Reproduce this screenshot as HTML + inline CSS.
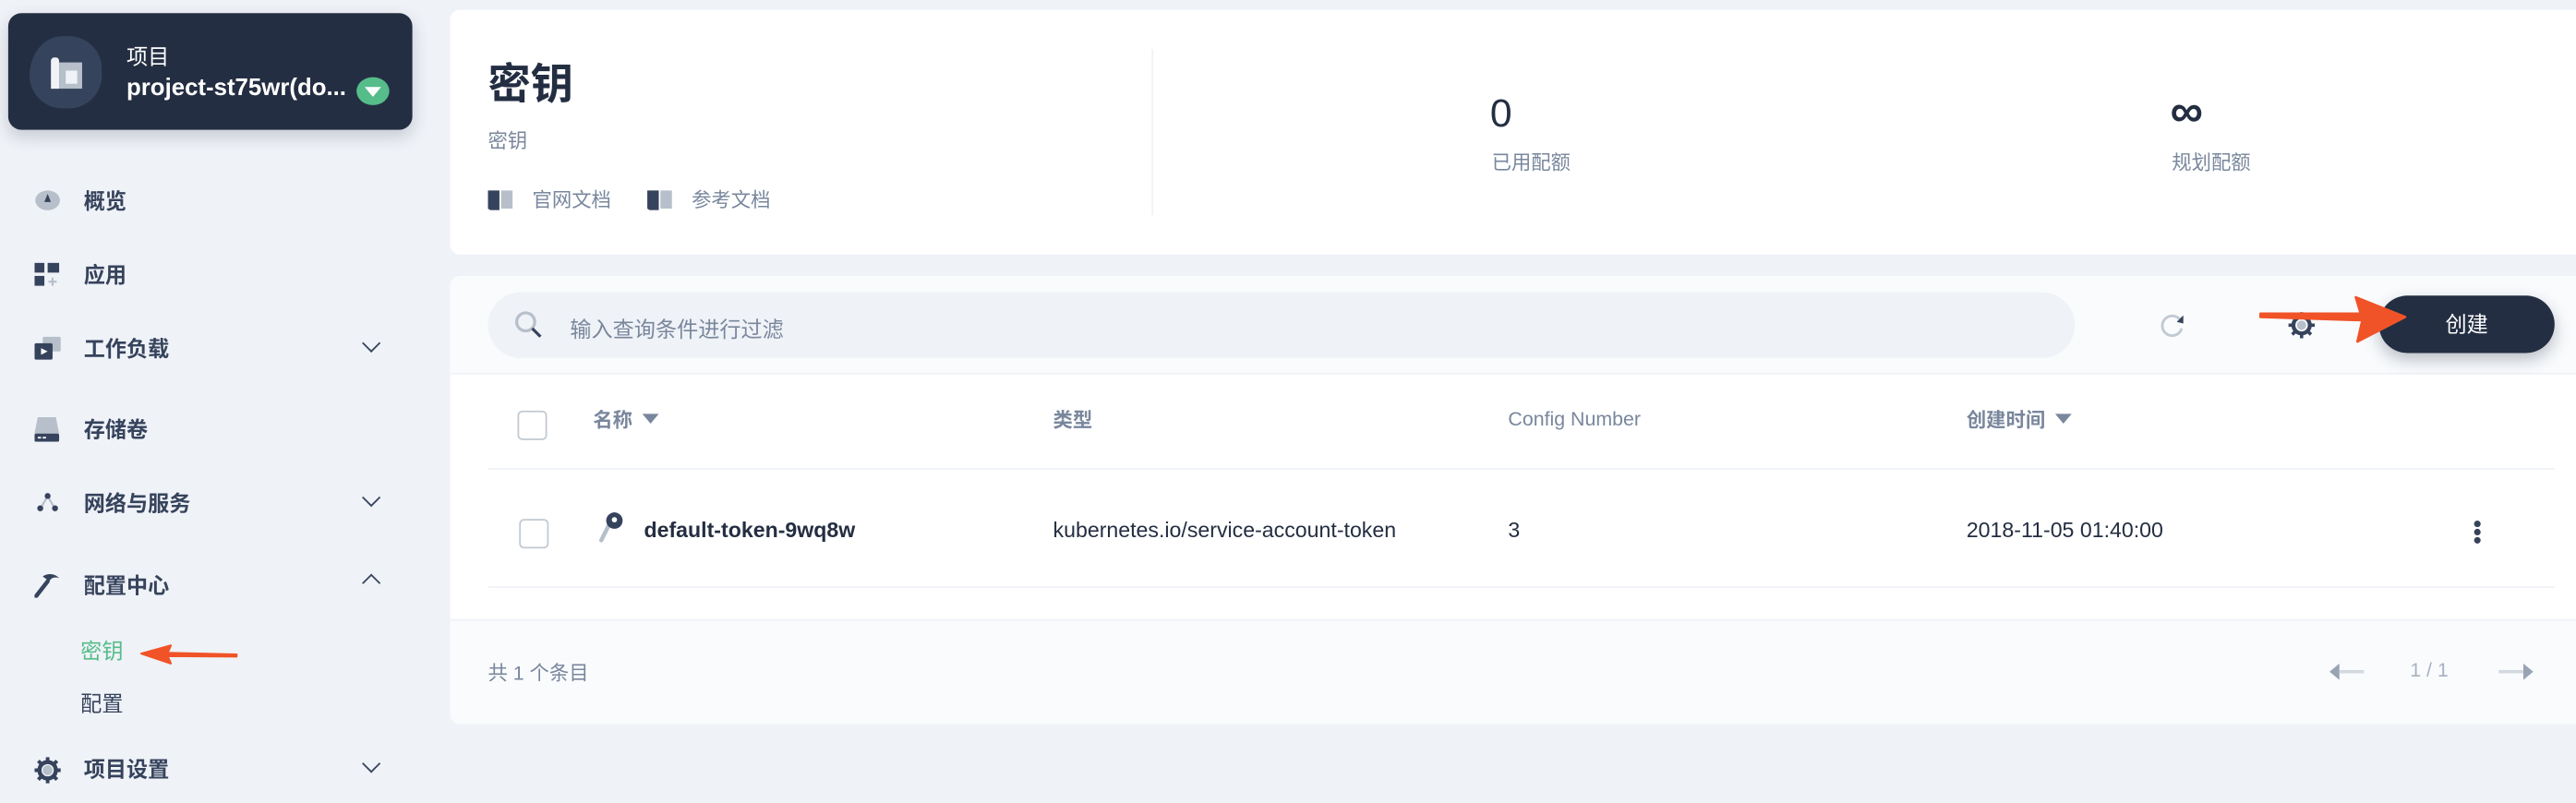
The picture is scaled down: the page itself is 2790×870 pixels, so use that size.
<!DOCTYPE html>
<html><head><meta charset="utf-8"><style>
*{box-sizing:border-box;margin:0;padding:0}
html,body{width:2790px;height:870px;overflow:hidden;background:#eff2f7}
#w{position:absolute;left:0;top:0;width:1568px;height:489px;transform:scale(1.7793);transform-origin:0 0;font-family:"Liberation Sans","Noto Sans CJK SC",sans-serif;color:#242e42}
.a{position:absolute;white-space:nowrap}
.mi{position:absolute;left:51px;font-size:13px;font-weight:bold;color:#36435c}
.ic{position:absolute;left:21px}
.chev{position:absolute;left:222px;width:8px;height:8px;border-right:1.6px solid #36435c;border-bottom:1.6px solid #36435c;transform:rotate(45deg)}
.up{transform:rotate(-135deg)}
.cb{position:absolute;width:18px;height:18px;border:1px solid #c1c9d1;border-radius:3px;background:#fff}
.th{position:absolute;top:247px;font-size:12px;font-weight:bold;color:#79879c}
.td{position:absolute;top:315px;font-size:13px;color:#242e42}
.tri{display:inline-block;width:0;height:0;border-left:5px solid transparent;border-right:5px solid transparent;border-top:6px solid #79879c;margin-left:6px;vertical-align:2px}
</style></head><body><div id="w">
<div class="a" style="left:5px;top:8px;width:246px;height:71px;background:#242e42;border-radius:8px;box-shadow:0 4px 10px rgba(36,46,66,.2)"></div>
<div class="a" style="left:18px;top:22px;width:44px;height:44px;background:#36435c;border-radius:50% 50% 50% 50%/60% 50% 50% 50%"></div>
<div class="a" style="left:31px;top:35px;width:5px;height:19px;background:#eff2f7;border-radius:2px 2px 0 0"></div>
<div class="a" style="left:36px;top:38px;width:14px;height:16px;background:#b6bfca"></div>
<div class="a" style="left:40px;top:43px;width:7px;height:8px;background:#eff2f7"></div>
<div class="a" style="left:77px;top:24px;font-size:13px;color:#fff">项目</div>
<div class="a" style="left:77px;top:46px;font-size:14.5px;font-weight:bold;color:#fff">project-st75wr(do...</div>
<div class="a" style="left:217px;top:47px;width:20px;height:17px;border-radius:50%;background:#55bc8a"></div>
<div class="a" style="left:222px;top:53px;width:0;height:0;border-left:5px solid transparent;border-right:5px solid transparent;border-top:6px solid #fff"></div>
<svg class="ic" style="top:115px" width="16" height="14" viewBox="0 0 16 14"><ellipse cx="8" cy="7" rx="7.5" ry="6" fill="#b6bfca"/><path d="M8 3 L10 8 H6Z" fill="#36435c"/></svg>
<div class="mi" style="top:112px">概览</div>
<svg class="ic" style="top:160px" width="16" height="15" viewBox="0 0 16 15"><rect x="0" y="0" width="6" height="6" fill="#36435c"/><rect x="8" y="0" width="7" height="6" fill="#36435c"/><rect x="0" y="8" width="6" height="6" fill="#36435c"/><path d="M11 9v5M8.5 11.5h5" stroke="#b6bfca" stroke-width="1.2"/></svg>
<div class="mi" style="top:157px">应用</div>
<svg class="ic" style="top:205px" width="16" height="15" viewBox="0 0 16 15"><rect x="5" y="0" width="11" height="9" rx="1" fill="#b6bfca"/><rect x="0" y="4" width="11" height="10" rx="1" fill="#36435c"/><path d="M4 7 L8 9 L4 11Z" fill="#fff"/></svg>
<div class="mi" style="top:202px">工作负载</div><div class="chev" style="top:205px"></div>
<svg class="ic" style="top:254px" width="16" height="15" viewBox="0 0 16 15"><path d="M2 0h11l2 10H0Z" fill="#b6bfca"/><rect x="0" y="10" width="15" height="5" rx="1" fill="#36435c"/><rect x="2" y="12" width="2" height="1" fill="#fff"/><rect x="5" y="12" width="2" height="1" fill="#fff"/></svg>
<div class="mi" style="top:251px">存储卷</div>
<svg class="ic" style="top:299px" width="16" height="14" viewBox="0 0 16 14"><path d="M8 3L4 10M8 3l4 7" stroke="#b6bfca" stroke-width="1.2"/><circle cx="8" cy="3" r="1.8" fill="#36435c"/><circle cx="3.5" cy="10.5" r="1.8" fill="#36435c"/><circle cx="12.5" cy="10.5" r="1.8" fill="#36435c"/></svg>
<div class="mi" style="top:296px">网络与服务</div><div class="chev" style="top:299px"></div>
<svg class="ic" style="top:348px" width="16" height="16" viewBox="0 0 16 16"><path d="M1 15L8 6" stroke="#36435c" stroke-width="2.5" stroke-linecap="round"/><path d="M5 3 C8 1 12 1 15 4 C12 3 10 4 9 6Z" fill="#36435c"/></svg>
<div class="mi" style="top:346px">配置中心</div><div class="chev up" style="top:351px"></div>
<div class="a" style="left:49px;top:386px;font-size:13px;color:#55bc8a">密钥</div>
<div class="a" style="left:49px;top:418px;font-size:13px;color:#36435c">配置</div>
<svg class="ic" style="top:461px" width="16" height="16" viewBox="0 0 16 16"><circle cx="8" cy="8" r="5" fill="none" stroke="#36435c" stroke-width="2.5"/><g stroke="#36435c" stroke-width="2.2"><path d="M8 0v3M8 13v3M0 8h3M13 8h3M2.3 2.3l2 2M11.7 11.7l2 2M2.3 13.7l2-2M11.7 4.3l2-2"/></g><circle cx="8" cy="8" r="3" fill="#b6bfca"/></svg>
<div class="mi" style="top:458px">项目设置</div><div class="chev" style="top:461px"></div>
<svg class="a" style="left:84px;top:389px" width="62" height="18" viewBox="0 0 62 18"><path d="M60 9.5 L18 8.5 L20 4 L2 9 L20 15 L18 10.5 L60 10.8Z" fill="#f05327" stroke="#f05327" stroke-width="1.2" stroke-linejoin="round"/></svg>
<div class="a" style="left:274px;top:6px;width:1300px;height:149px;background:#fff;border-radius:6px"></div>
<div class="a" style="left:297px;top:31px;font-size:26px;font-weight:bold;color:#242e42">密钥</div>
<div class="a" style="left:297px;top:77px;font-size:12px;color:#79879c">密钥</div>
<svg class="a" style="left:297px;top:115px" width="16" height="13" viewBox="0 0 16 13"><path d="M0 1h7v12H1.5L0 12Z" fill="#36435c"/><rect x="8" y="1" width="7" height="11" fill="#b6bfca"/></svg>
<div class="a" style="left:324px;top:113px;font-size:12px;color:#79879c">官网文档</div>
<svg class="a" style="left:394px;top:115px" width="16" height="13" viewBox="0 0 16 13"><path d="M0 1h7v12H1.5L0 12Z" fill="#36435c"/><rect x="8" y="1" width="7" height="11" fill="#b6bfca"/></svg>
<div class="a" style="left:421px;top:113px;font-size:12px;color:#79879c">参考文档</div>
<div class="a" style="left:701px;top:30px;width:1px;height:101px;background:#eff2f7"></div>
<div class="a" style="left:907px;top:56px;font-size:24px;color:#242e42">0</div>
<div class="a" style="left:908px;top:90px;font-size:12px;color:#79879c">已用配额</div>
<div class="a" style="left:1321px;top:52px;font-size:28px;font-weight:bold;color:#242e42">∞</div>
<div class="a" style="left:1322px;top:90px;font-size:12px;color:#79879c">规划配额</div>
<div class="a" style="left:274px;top:168px;width:1300px;height:273px;background:#fff;border-radius:6px;overflow:hidden">
<div class="a" style="left:0;top:0;width:1300px;height:60px;background:#f9fbfd;border-bottom:1px solid #eff2f7"></div>
<div class="a" style="left:0;top:209px;width:1300px;height:64px;background:#f9fbfd;border-top:1px solid #eff2f7"></div>
</div>
<div class="a" style="left:297px;top:178px;width:966px;height:40px;background:#eff2f7;border-radius:20px"></div>
<svg class="a" style="left:313px;top:189px" width="18" height="18" viewBox="0 0 18 18"><circle cx="7" cy="7" r="5.5" fill="none" stroke="#b6bfca" stroke-width="1.8"/><path d="M11 11l5 5" stroke="#36435c" stroke-width="1.8"/></svg>
<div class="a" style="left:347px;top:190px;font-size:13px;color:#79879c">输入查询条件进行过滤</div>
<svg class="a" style="left:1314px;top:189px" width="18" height="18" viewBox="0 0 18 18"><path d="M13.5 6.5 A6 6 0 1 0 14 11" fill="none" stroke="#c1c9d1" stroke-width="1.6"/><path d="M15 3 L15 8 L11 7Z" fill="#36435c"/></svg>
<svg class="a" style="left:1393px;top:190px" width="16" height="16" viewBox="0 0 16 16"><circle cx="8" cy="8" r="5" fill="none" stroke="#36435c" stroke-width="2.4"/><g stroke="#36435c" stroke-width="2"><path d="M8 0v3M8 13v3M0 8h3M13 8h3M2.3 2.3l2 2M11.7 11.7l2 2M2.3 13.7l2-2M11.7 4.3l2-2"/></g><circle cx="8" cy="8" r="2.8" fill="#b6bfca"/></svg>
<div class="a" style="left:1448px;top:180px;width:107px;height:35px;background:#242e42;border-radius:18px;box-shadow:0 4px 10px rgba(36,46,66,.3);color:#fff;font-size:13px;text-align:center;line-height:35px">创建</div>
<svg class="a" style="left:1374px;top:180px" width="92" height="30" viewBox="0 0 92 30"><path d="M2 13 L64 15 L61 28 L90 13 L60 1 L63 11 L2 11Z" fill="#f05327" stroke="#f05327" stroke-width="1.5" stroke-linejoin="round"/></svg>
<div class="cb" style="left:315px;top:250px"></div>
<div class="th" style="left:361px">名称<span class="tri"></span></div>
<div class="th" style="left:641px">类型</div>
<div class="th" style="left:918px;font-weight:normal;top:248px">Config Number</div>
<div class="th" style="left:1197px">创建时间<span class="tri"></span></div>
<div class="a" style="left:297px;top:285px;width:1258px;height:1px;background:#eff2f7"></div>
<div class="cb" style="left:316px;top:316px"></div>
<svg class="a" style="left:364px;top:311px" width="18" height="20" viewBox="0 0 18 20"><path d="M7 8 L2 18" stroke="#b6bfca" stroke-width="2.5" stroke-linecap="round"/><circle cx="10" cy="6" r="5" fill="#36435c"/><circle cx="10" cy="5.5" r="1.6" fill="#fff"/></svg>
<div class="td" style="left:392px;font-weight:bold">default-token-9wq8w</div>
<div class="td" style="left:641px">kubernetes.io/service-account-token</div>
<div class="td" style="left:918px">3</div>
<div class="td" style="left:1197px">2018-11-05 01:40:00</div>
<div class="a" style="left:1506px;top:317px;width:4px;height:4px;border-radius:50%;background:#36435c;box-shadow:0 5px 0 #36435c,0 10px 0 #36435c"></div>
<div class="a" style="left:297px;top:357px;width:1258px;height:1px;background:#eff2f7"></div>
<div class="a" style="left:297px;top:401px;font-size:12px;color:#79879c">共 1 个条目</div>
<svg class="a" style="left:1418px;top:403px" width="22" height="12" viewBox="0 0 22 12"><path d="M0 6 L6 1 V11Z" fill="#99a4b3"/><rect x="6" y="5" width="15" height="2" fill="#d3d9e0"/></svg>
<div class="a" style="left:1467px;top:401px;font-size:12px;color:#a8b2c0">1 / 1</div>
<svg class="a" style="left:1520px;top:403px" width="22" height="12" viewBox="0 0 22 12"><rect x="1" y="5" width="15" height="2" fill="#d3d9e0"/><path d="M22 6 L16 1 V11Z" fill="#99a4b3"/></svg>
</div></body></html>
